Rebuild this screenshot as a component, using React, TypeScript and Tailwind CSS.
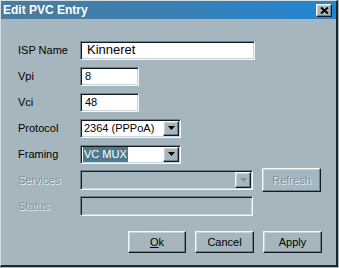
import React from 'react';

const font = "font-['Liberation_Sans',Arial,sans-serif]";
const raised =
    "border border-t-[#f4f8fa] border-l-[#f4f8fa] border-r-[#141a1e] border-b-[#141a1e] shadow-[inset_-1px_-1px_0_#6e8089,inset_1px_1px_0_#c8d4da]";
const sunken =
    "border border-t-[#6e8089] border-l-[#6e8089] border-r-[#f4f8fa] border-b-[#f4f8fa] shadow-[inset_1px_1px_0_#141a1e,inset_-1px_-1px_0_#c8d4da]";
const disabledText = "text-[#7e9099] [text-shadow:1px_1px_0_#e6eef2]";

function Arrow({ disabled }: { disabled?: boolean }) {
    return (
        <div className={`w-[16px] h-full bg-[#a6b6be] flex items-center justify-center ${raised}`}>
            <svg width="7" height="4" viewBox="0 0 7 4">
                <path d="M0 0h7L3.5 4z" fill={disabled ? '#7e9099' : '#000'} />
            </svg>
        </div>
    );
}

function Row({ label, disabled, children }: { label: string; disabled?: boolean; children: React.ReactNode }) {
    return (
        <div className="h-[26px] flex items-center">
            <div className={`w-[62px] text-[11px] ${disabled ? disabledText : 'text-black'}`}>{label}</div>
            {children}
        </div>
    );
}

export default function App() {
    return (
        <div className={`w-[339px] h-[268px] bg-[#a6b6be] ${font}`}>
            <div className="w-[338px] h-[267px] flex flex-col border-l border-t border-l-[#d2dde2] border-t-[#d2dde2] border-r-2 border-b-2 border-r-[#1e282c] border-b-[#1e282c]">
                {/* Title bar */}
                <div className="h-[18px] flex items-center justify-between pl-[2px] pr-[4px] bg-gradient-to-r from-[#4a7c9c] via-[#3a80b4] to-[#1e86d2]">
                    <span className="text-white font-bold text-[12px] leading-none">Edit PVC Entry</span>
                    <div className={`w-[16px] h-[13px] bg-[#a6b6be] flex items-center justify-center ${raised}`}>
                        <svg width="9" height="7" viewBox="0 0 9 7">
                            <path d="M1 0.5l7 6M8 0.5l-7 6" stroke="#000" strokeWidth="2" />
                        </svg>
                    </div>
                </div>

                <div className="flex flex-col pl-[17px] pt-[18px]">
                    <Row label="ISP Name">
                        <div className={`w-[175px] h-[19px] bg-white flex items-center pl-[6px] text-[13px] ${sunken}`}>Kinneret</div>
                    </Row>
                    <Row label="Vpi">
                        <div className={`w-[59px] h-[19px] bg-white flex items-center pl-[4px] text-[11px] ${sunken}`}>8</div>
                    </Row>
                    <Row label="Vci">
                        <div className={`w-[59px] h-[19px] bg-white flex items-center pl-[4px] text-[11px] ${sunken}`}>48</div>
                    </Row>
                    <Row label="Protocol">
                        <div className={`w-[101px] h-[19px] bg-white flex items-center justify-between pl-[2px] pr-px py-px text-[11px] ${sunken}`}>
                            <span className="ml-px">2364 (PPPoA)</span>
                            <Arrow />
                        </div>
                    </Row>
                    <Row label="Framing">
                        <div className={`w-[101px] h-[19px] bg-white flex items-center justify-between pl-[2px] pr-px py-px text-[11px] ${sunken}`}>
                            <span className="bg-[#4d7b8d] text-white px-px h-full flex items-center">VC MUX</span>
                            <Arrow />
                        </div>
                    </Row>
                    <Row label="Services" disabled>
                        <div className={`w-[173px] h-[20px] bg-[#a6b6be] flex items-center justify-end pr-px py-px ${sunken}`}>
                            <Arrow disabled />
                        </div>
                        <button className={`ml-[9px] w-[59px] h-[24px] bg-[#a6b6be] text-[11px] ${disabledText} ${raised}`}>Refresh</button>
                    </Row>
                    <Row label="Status" disabled>
                        <div className={`w-[173px] h-[20px] bg-[#a6b6be] ${sunken}`} />
                    </Row>

                    <div className="flex mt-[12px] ml-[110px] gap-[9px]">
                        <button className={`w-[58px] h-[22px] bg-[#a6b6be] text-[11px] text-black ${raised}`}>
                            <span className="underline">O</span>k
                        </button>
                        <button className={`w-[59px] h-[22px] bg-[#a6b6be] text-[11px] text-black ${raised}`}>Cancel</button>
                        <button className={`w-[59px] h-[22px] bg-[#a6b6be] text-[11px] text-black ${raised}`}>Apply</button>
                    </div>
                </div>
            </div>
        </div>
    );
}
